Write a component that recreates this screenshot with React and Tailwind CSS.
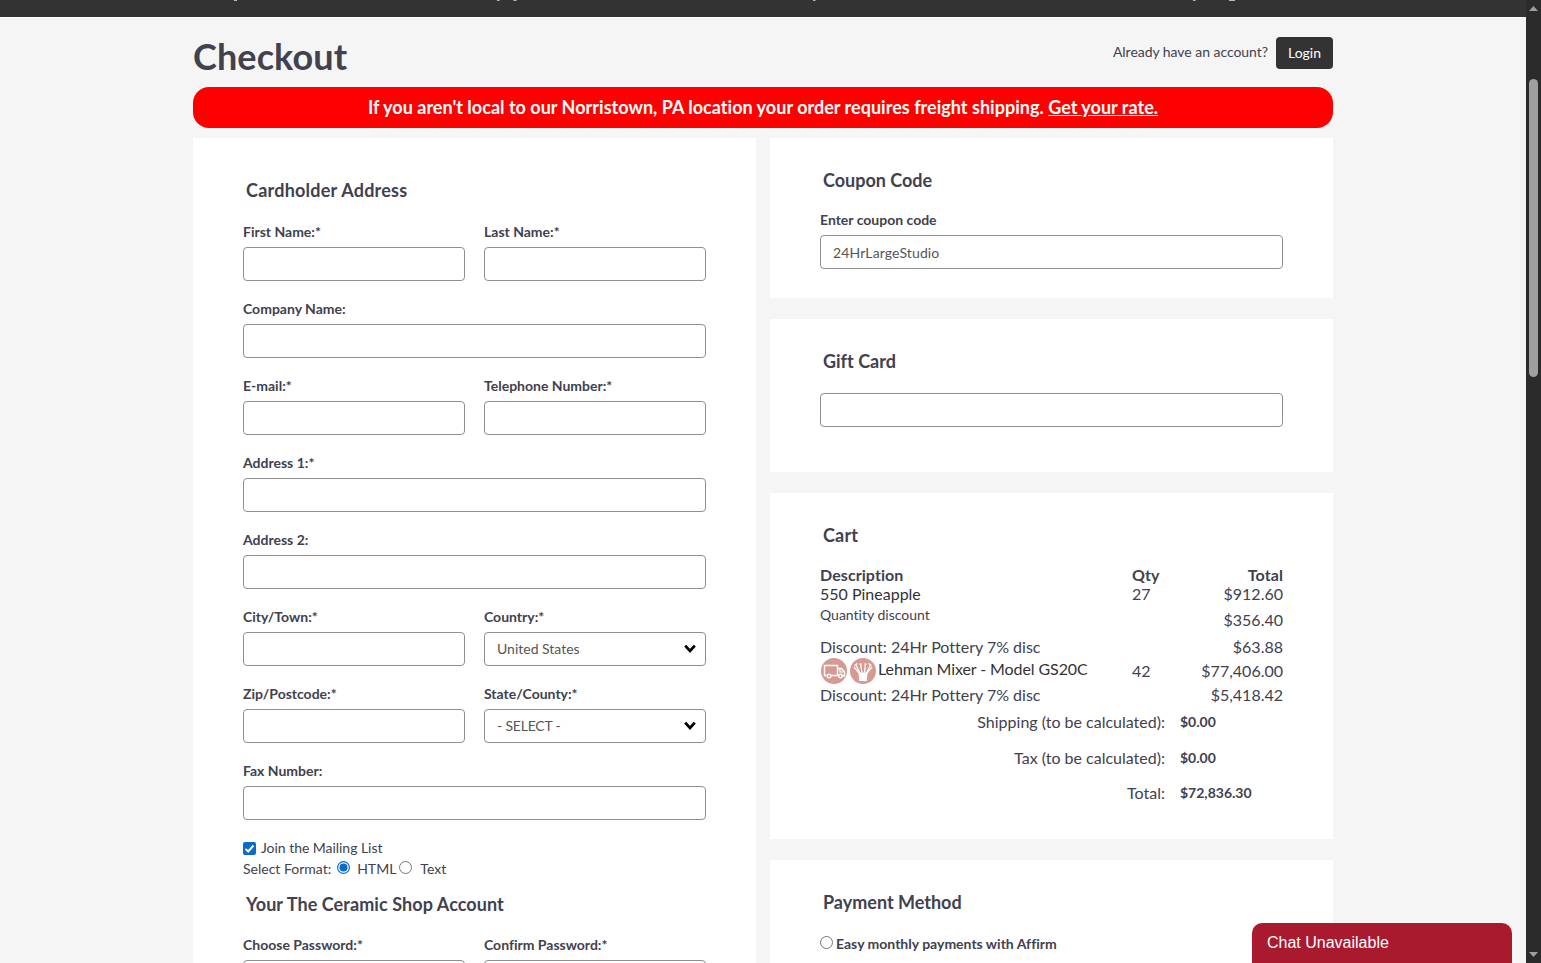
import React from "react";

function Field({ label, value, select, valueClass = "" }) {
  return (
    <label className="block min-w-0 flex-1">
      <span className="mb-[5px] block h-5 text-[14px] font-bold leading-5 whitespace-nowrap">{label}</span>
      <span className="flex h-[34px] items-center justify-between rounded border border-[#8f8f8f] bg-white pl-3 pr-[9px] text-[14px] text-[#555]">
        <span className={valueClass}>{value}</span>
        {select && (
          <svg width="12" height="10" viewBox="0 0 12 10" fill="none" stroke="#000" strokeWidth="2.8" className="mb-px">
            <path d="M1.200 1.600 6 7l4.800-5.400" />
          </svg>
        )}
      </span>
    </label>
  );
}

function Row({ children }) {
  return <div className="mb-[18px] flex gap-[19px]">{children}</div>;
}

function Heading({ children, className = "" }) {
  return <h2 className={"h-6 pl-[3px] text-[18px] font-bold leading-6 whitespace-nowrap " + className}>{children}</h2>;
}

function TruckBadge() {
  return (
    <svg width="26" height="26" viewBox="0 0 26 26" fill="none" stroke="#fff" strokeWidth="1.400">
      <circle cx="13" cy="13" r="13" fill="#d79a93" stroke="none" />
      <path d="M5.500 17.500H3.500V7.500h13v10H10M16.500 10.500h4l3 3.500v4h-2M16.500 17.500h1" />
      <path d="M19 11v3h3.500" strokeWidth="1.200" />
      <circle cx="8" cy="18" r="1.800" />
      <circle cx="19.500" cy="18" r="1.800" />
    </svg>
  );
}

function ToolsBadge() {
  return (
    <svg width="26" height="26" viewBox="0 0 26 26" fill="none" stroke="#fff">
      <circle cx="13" cy="13" r="13" fill="#d79a93" stroke="none" />
      <path d="M8.500 14.500h9l-.700 8.500H9.200z" fill="#fff" stroke="none" />
      <path d="M10 15 6 7M12 14.500 10.500 6M14.500 14.500 15.500 6M16.500 15 20.500 7" strokeWidth="1.300" />
      <path d="M4.500 7.500 7.500 5.500M9.300 6h2.400M14.300 6h2.400M18.500 5.500l3 2M4 9l5 6M22 9l-5 6" strokeWidth="1.200" />
    </svg>
  );
}

function CartRow({ className, name, qty, total }) {
  return (
    <div className={"grid grid-cols-[312px_50px_101px] text-[16px] whitespace-nowrap " + className}>
      <div>{name}</div>
      <div>{qty}</div>
      <div className="text-right">{total}</div>
    </div>
  );
}

function Summary({ label, value, className }) {
  return (
    <div className={"flex leading-5 whitespace-nowrap " + className}>
      <div className="w-[345px] text-right text-[16px]">{label}</div>
      <div className="pl-[15px] text-[14px] font-bold leading-5">{value}</div>
    </div>
  );
}

export default function App() {
  return (
    <div className="relative flex h-[963px] w-[1541px] overflow-hidden bg-[#f5f5f5] font-['Lato',sans-serif] text-[#41414f] [font-variant-ligatures:none]">
      <main className="flex w-[1526px] flex-col">
        <header className="h-[17px] shrink-0 bg-[#333]">
          <svg width="1526" height="17" fill="none" stroke="#bbb" strokeWidth="1.500">
            <path d="M234 .3h3M497 .3h2.500M513.500 .3h3M813 .3h2.500M1193 .3h2.500M1229 .3h6" />
          </svg>
        </header>
        <div className="h-px shrink-0 bg-white" />
        <div className="ml-[193px] w-[1140px]">
          <div className="flex h-[69px] justify-between">
            <h1 className="mt-[14px] text-[36px] font-bold leading-[48px] tracking-[0.1px]">Checkout</h1>
            <div className="mt-[19px] flex h-8 items-start">
              <span className="mr-2 text-[14px] leading-[30px] tracking-[-0.04px]">Already have an account?</span>
              <button className="h-8 w-[57px] rounded bg-[#333] pb-0.5 text-[14px] text-white">Login</button>
            </div>
          </div>
          <div className="h-[41px] rounded-[16px] bg-[#f00] text-center text-[18px] font-bold leading-10 tracking-[0.02px] text-white">
            If you aren't local to our Norristown, PA location your order requires freight shipping. <a className="underline">Get your rate.</a>
          </div>
          <div className="mt-[10px] flex gap-[14px]">
            <section className="h-[825px] w-[563px] overflow-hidden bg-white px-[50px] pt-10">
              <Heading className="tracking-[0.23px]">Cardholder Address</Heading>
              <div className="mt-5">
                <Row><Field label="First Name:*" /><Field label="Last Name:*" /></Row>
                <Row><Field label="Company Name:" /></Row>
                <Row><Field label="E-mail:*" /><Field label="Telephone Number:*" /></Row>
                <Row><Field label="Address 1:*" /></Row>
                <Row><Field label="Address 2:" /></Row>
                <Row><Field label="City/Town:*" /><Field label="Country:*" value="United States" select valueClass="pb-0.5" /></Row>
                <Row><Field label="Zip/Postcode:*" /><Field label="State/County:*" value="- SELECT -" select valueClass="pb-0.5 tracking-[-0.2px]" /></Row>
                <Row><Field label="Fax Number:" /></Row>
              </div>
              <div className="flex h-5 items-center text-[14px]">
                <svg width="13" height="13" viewBox="0 0 13 13" className="mr-[5px]">
                  <rect width="13" height="13" rx="2" fill="#0b6bcb" />
                  <path d="m2.500 6.800 2.700 2.700 5.300-6" fill="none" stroke="#fff" strokeWidth="1.900" />
                </svg>
                <span className="pb-0.5 tracking-[-0.04px]">Join the Mailing List</span>
              </div>
              <div className="mt-[1px] flex h-5 items-center text-[14px]">
                <span className="pb-0.5">Select Format:</span>
                <svg width="13" height="13" viewBox="0 0 13 13" className="mb-[3px] ml-1.5 mr-[7px]">
                  <circle cx="6.500" cy="6.500" r="5.900" fill="#fff" stroke="#0b6bcb" strokeWidth="1.200" />
                  <circle cx="6.500" cy="6.500" r="4" fill="#0b6bcb" />
                </svg>
                <span className="pb-0.5">HTML</span>
                <svg width="13" height="13" viewBox="0 0 13 13" className="mb-[3px] ml-[3px] mr-2">
                  <circle cx="6.500" cy="6.500" r="6" fill="#fff" stroke="#767676" />
                </svg>
                <span className="pb-0.5">Text</span>
              </div>
              <div className="mt-[13px]"><Heading className="tracking-[0.08px]">Your The Ceramic Shop Account</Heading></div>
              <div className="mt-[19px]">
                <Row><Field label="Choose Password:*" /><Field label="Confirm Password:*" /></Row>
              </div>
            </section>
            <div className="flex h-[825px] w-[563px] flex-col overflow-hidden">
              <section className="mb-[21px] h-[160px] shrink-0 bg-white px-[50px] pt-[30px]">
                <Heading>Coupon Code</Heading>
                <div className="mt-[18px]"><Field label="Enter coupon code" value="24HrLargeStudio" valueClass="tracking-[0.13px]" /></div>
              </section>
              <section className="mb-[21px] h-[153px] shrink-0 bg-white px-[50px] pt-[30px]">
                <Heading>Gift Card</Heading>
                <div className="mt-5 h-[34px] rounded border border-[#8f8f8f]" />
              </section>
              <section className="mb-[21px] h-[346px] shrink-0 bg-white px-[50px] pt-[30px]">
                <Heading className="tracking-[0.2px]">Cart</Heading>
                <CartRow className="mt-[18px] h-[19px] font-bold leading-[19px] tracking-[0.08px]" name="Description" qty="Qty" total="Total" />
                <CartRow className="h-[19px] leading-[19px]" name={<span className="text-[#333]">550 Pineapple</span>} qty="27" total="$912.60" />
                <CartRow className="h-[34px] leading-[33px]" name={<span className="block text-[14px] leading-6">Quantity discount</span>} total="$356.40" />
                <CartRow className="h-[20px] leading-[20px]" name="Discount: 24Hr Pottery 7% disc" total="$63.88" />
                <CartRow
                  className="h-[28px] leading-[28px]"
                  name={
                    <div className="flex items-start gap-[2px] pl-px text-[#333]">
                      <div className="mt-px flex gap-[3px]"><TruckBadge /><ToolsBadge /></div>
                      <span className="leading-[24px] tracking-[-0.09px]">Lehman Mixer - Model GS20C</span>
                    </div>
                  }
                  qty="42"
                  total="$77,406.00"
                />
                <CartRow className="h-[20px] leading-[20px]" name="Discount: 24Hr Pottery 7% disc" total="$5,418.42" />
                <Summary className="mt-[7px] h-9" label="Shipping (to be calculated):" value="$0.00" />
                <Summary className="h-[35px]" label="Tax (to be calculated):" value="$0.00" />
                <Summary label="Total:" value="$72,836.30" />
              </section>
              <section className="h-[103px] shrink-0 bg-white px-[50px] pt-[30px]">
                <Heading>Payment Method</Heading>
                <div className="mt-5 flex h-5 items-center text-[14px] font-bold">
                  <svg width="13" height="13" viewBox="0 0 13 13" className="mb-[3px] mr-[3px]">
                    <circle cx="6.500" cy="6.500" r="6" fill="#fff" stroke="#767676" />
                  </svg>
                  <span className="pb-0.5">Easy monthly payments with Affirm</span>
                </div>
              </section>
            </div>
          </div>
        </div>
      </main>
      <aside className="flex w-[15px] flex-col items-center bg-[#2b2b2b]">
        <svg width="15" height="17"><path d="m7.500 6 4.500 5H3z" fill="#9f9f9f" /></svg>
        <div className="mt-[62px] h-[298px] w-[9px] rounded-full bg-[#9f9f9f]" />
        <svg width="15" height="17" className="mt-auto"><path d="m7.500 11 4.500-5H3z" fill="#9f9f9f" /></svg>
      </aside>
      <div className="absolute bottom-0 left-[1252px] h-10 w-[260px] rounded-t-[10px] bg-[#aa1a2e] pl-[15px] font-['Liberation_Sans',sans-serif] text-[16px] leading-10 text-white">
        Chat Unavailable
      </div>
    </div>
  );
}
